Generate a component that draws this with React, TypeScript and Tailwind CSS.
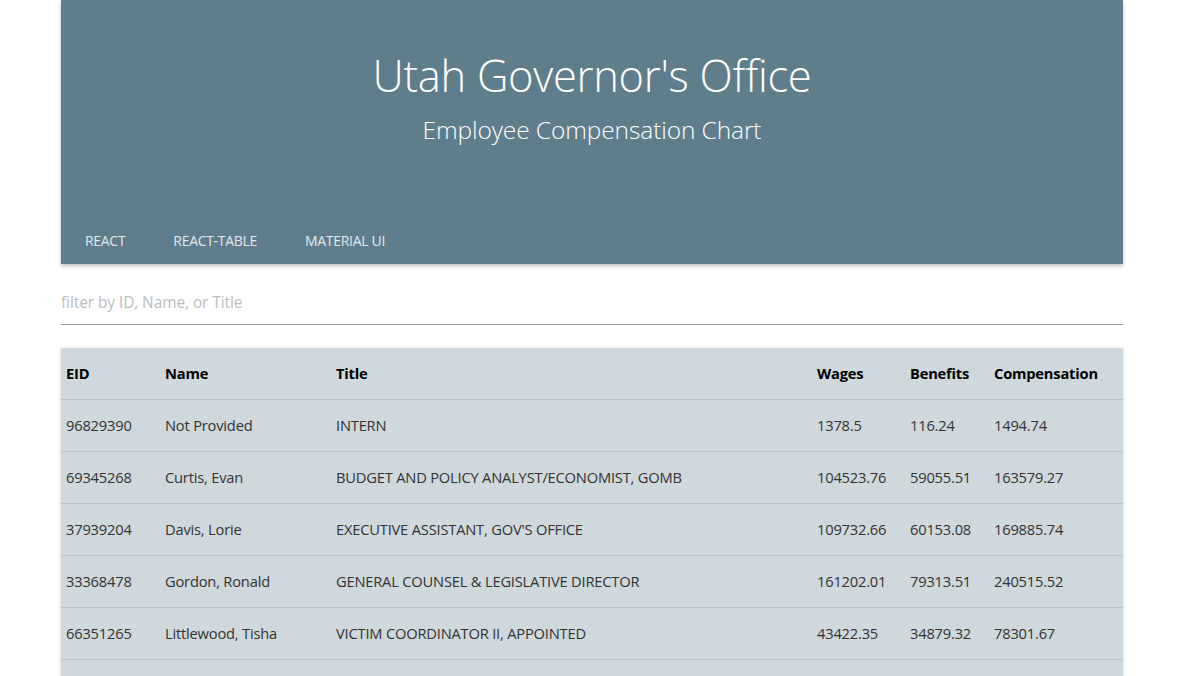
import React from 'react';

interface Employee {
  eid: string;
  name: string;
  title: string;
  wages: string;
  benefits: string;
  compensation: string;
}

const employees: Employee[] = [
  { eid: '96829390', name: 'Not Provided', title: 'INTERN', wages: '1378.5', benefits: '116.24', compensation: '1494.74' },
  { eid: '69345268', name: 'Curtis, Evan', title: 'BUDGET AND POLICY ANALYST/ECONOMIST, GOMB', wages: '104523.76', benefits: '59055.51', compensation: '163579.27' },
  { eid: '37939204', name: 'Davis, Lorie', title: "EXECUTIVE ASSISTANT, GOV'S OFFICE", wages: '109732.66', benefits: '60153.08', compensation: '169885.74' },
  { eid: '33368478', name: 'Gordon, Ronald', title: 'GENERAL COUNSEL & LEGISLATIVE DIRECTOR', wages: '161202.01', benefits: '79313.51', compensation: '240515.52' },
  { eid: '66351265', name: 'Littlewood, Tisha', title: 'VICTIM COORDINATOR II, APPOINTED', wages: '43422.35', benefits: '34879.32', compensation: '78301.67' },
];

const tabs = ['React', 'React-Table', 'Material UI'];

const cols = 'grid grid-cols-[99px_171px_481px_93px_84px_1fr] pl-[5px] items-center';

export default function App() {
  return (
    <div className="min-h-screen bg-white font-['Open_Sans',sans-serif]">
      <div className="w-[1062px] ml-[61px]">
        <header className="bg-[#607d8b] h-[264px] flex flex-col shadow-[0_2px_4px_rgba(0,0,0,0.25)]">
          <div className="flex flex-col items-center pt-[48px]">
            <h1 className="text-white text-[43.5px] font-light leading-[56px] tracking-[-0.3px]">
              Utah Governor's Office
            </h1>
            <h2 className="text-white text-[24.5px] font-light leading-[32px] mt-[10px] tracking-[-0.1px]">
              Employee Compensation Chart
            </h2>
          </div>
          <nav className="mt-auto flex h-[48px] items-center">
            {tabs.map((tab) => (
              <button
                key={tab}
                type="button"
                className="px-6 h-full uppercase text-[14px] text-[#e3e8eb] tracking-[-0.3px]"
              >
                {tab}
              </button>
            ))}
          </nav>
        </header>

        <div className="mt-[24px] border-b border-[#9e9e9e] h-[37px] flex items-start">
          <input
            type="text"
            placeholder="filter by ID, Name, or Title"
            className="w-full h-[28px] bg-transparent outline-none text-[15.5px] placeholder:text-[#bdbdbd] tracking-[-0.1px]"
          />
        </div>

        <div className="mt-[23px] bg-[#cfd8dc] shadow-[0_1px_4px_rgba(0,0,0,0.2)] text-[14.7px] tracking-[-0.2px]">
          <div className={`${cols} h-[52px] font-bold text-black border-b border-[#b9c3c7]`}>
            <span>EID</span>
            <span>Name</span>
            <span>Title</span>
            <span>Wages</span>
            <span>Benefits</span>
            <span>Compensation</span>
          </div>
          {employees.map((e) => (
            <div key={e.eid} className={`${cols} h-[52px] text-[#333] border-b border-[#b9c3c7]`}>
              <span>{e.eid}</span>
              <span>{e.name}</span>
              <span>{e.title}</span>
              <span>{e.wages}</span>
              <span>{e.benefits}</span>
              <span>{e.compensation}</span>
            </div>
          ))}
          <div className="h-[52px]" />
        </div>
      </div>
    </div>
  );
}
